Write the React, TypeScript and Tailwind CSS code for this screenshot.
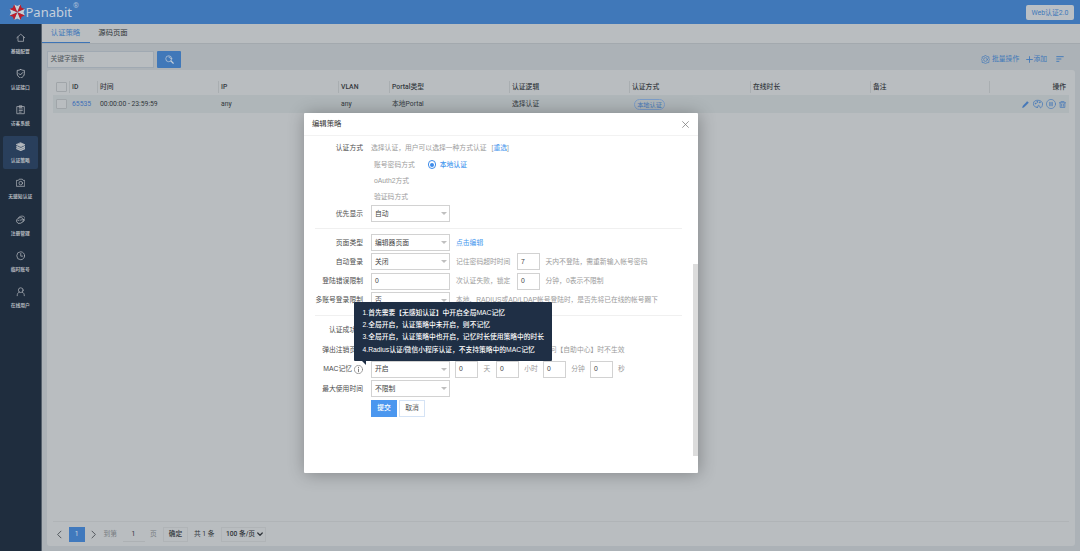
import type { ReactNode } from "react";
import clsx from "clsx";

const stroke = {
  fill: "none",
  stroke: "currentColor",
  strokeWidth: 1.8,
  strokeLinecap: "round" as const,
  strokeLinejoin: "round" as const,
};

function Icon({ children, className }: { children: ReactNode; className?: string }) {
  return (
    <svg viewBox="0 0 24 24" className={clsx("shrink-0", className)} {...stroke}>
      {children}
    </svg>
  );
}

const menu = [
  { label: "基础配置", icon: <path d="M2 12 12 3l10 9M5 10v11h14V10" /> },
  {
    label: "认证接口",
    icon: (
      <path
        d="M12 1c3 2 6 2.500 9 2.500V12c0 5-4 9-9 11-5-2-9-6-9-11V3.500c3 0 6-.5 9-2.500zM7.500 11.500l3.500 3.500 6-6"
        strokeWidth={2.200}
      />
    ),
  },
  {
    label: "访客系统",
    icon: <path d="M3 4h18v18H3zM9 2h6v4H9zM8 10h8M8 14h8M8 18h5" />,
  },
  {
    label: "认证策略",
    active: true,
    icon: (
      <>
        <path d="M12 2 23 7l-11 5L1 7z" fill="currentColor" />
        <path d="m2 12 10 4.500L22 12M2 16.500 12 21l10-4.500" strokeWidth={3.500} />
      </>
    ),
  },
  {
    label: "无感知认证",
    icon: (
      <>
        <path d="M2 6h4l2-3h8l2 3h4v15H2z" />
        <circle cx="12" cy="13" r="4.500" />
      </>
    ),
  },
  {
    label: "注册管理",
    icon: (
      <>
        <ellipse cx="10" cy="14" rx="9" ry="7" transform="rotate(-20 10 14)" />
        <path d="M6 7c3-5 13-6 16-1 2 4-1 9-4 11M5 14l3-1M11 13l4-1" />
      </>
    ),
  },
  {
    label: "临时账号",
    icon: (
      <>
        <circle cx="12" cy="12" r="10" />
        <path d="M12 6v7h5" />
      </>
    ),
  },
  {
    label: "在线用户",
    icon: (
      <>
        <circle cx="12" cy="8" r="6" />
        <path d="M3 22c0-5 2-8 5-9M21 22c0-5-2-8-5-9" />
      </>
    ),
  },
];

function Logo() {
  return (
    <svg viewBox="-9.300 -9.300 18.600 18.600" className="mt-px h-[16.500px] w-[16.500px] shrink-0">
      {[0, 45, 90, 135, 180, 225, 270, 315].map((a, i) => (
        <path
          key={a}
          d="M0 0 3.600 -8.600 0 -7 -3.600 -8.600z"
          transform={`rotate(${a})`}
          fill={i % 2 ? "#c01c28" : "#c9cdd1"}
        />
      ))}
    </svg>
  );
}

function Sidebar() {
  return (
    <aside className="flex w-[41.500px] shrink-0 flex-col items-center border-r border-[#56616d] bg-[#1f2d3e] pt-[3px] text-[#b4b9be]">
      {menu.map((m) => (
        <div key={m.label} className="h-[36.430px] w-[35px]">
          <div
            className={clsx(
              "flex h-[33.500px] flex-col items-center rounded-[2px] pt-[6px]",
              m.active && "bg-[#293f5c]",
            )}
          >
            <Icon className="h-[9.500px] w-[9.500px]">{m.icon}</Icon>
            <span className="mt-[6.500px] text-[4.800px] leading-[6px] font-bold whitespace-nowrap">{m.label}</span>
          </div>
        </div>
      ))}
    </aside>
  );
}

function Cell({ children, className, head }: { children?: ReactNode; className?: string; head?: boolean }) {
  return (
    <div
      className={clsx(
        "flex items-center whitespace-nowrap",
        head ? "border-l border-[#a9aeb1] pl-[2px]" : "pl-[3px]",
        className,
      )}
    >
      {children}
    </div>
  );
}

const columns = ["ID", "时间", "IP", "VLAN", "Portal类型", "认证逻辑", "认证方式", "在线时长", "备注"];
const grid = "grid grid-cols-[16px_28px_121px_120px_51px_120px_120px_121px_120px_119px_80px]";

function Table() {
  return (
    <div className="mx-[6px] pt-[8px] text-[6.800px] text-[#33383d]">
      <div className={clsx(grid, "h-[17px] items-center font-medium")}>
        <div className="ml-[3px] h-[10px] w-[10.500px] rounded-[1px] border border-[#a0a5a9]" />
        {columns.map((c) => (
          <Cell key={c} head className="h-[12px]">
            {c}
          </Cell>
        ))}
        <Cell head className="h-[12px] justify-end pr-[3px]">
          操作
        </Cell>
      </div>
      <div className={clsx(grid, "h-[18px] items-center bg-[#afb6b9]")}>
        <div className="ml-[3px] h-[10px] w-[10.500px] rounded-[1px] border border-[#a0a5a9] bg-[#b9bdc0]" />
        <Cell className="text-[#4070b8]">65535</Cell>
        <Cell>00:00:00 - 23:59:59</Cell>
        <Cell>any</Cell>
        <Cell>any</Cell>
        <Cell>本地Portal</Cell>
        <Cell>选择认证</Cell>
        <Cell>
          <span className="ml-[2px] mt-px flex h-[11px] w-[31px] items-center justify-center rounded-full border border-[#7c9dc9] text-[6.200px] text-[#4377b9]">
            本地认证
          </span>
        </Cell>
        <Cell />
        <Cell />
        <Cell className="justify-end gap-[3px] pr-[3px] text-[#4377b9]">
          <Icon className="h-[7px] w-[7px]">
            <path d="M2 22l2-6L18 2l4 4L8 20z" fill="currentColor" />
          </Icon>
          <Icon className="ml-px h-[10px] w-[10px]">
            <path d="M10 20C5 20 1 17 1 11S6 3 12 3s11 4 11 9-3 9-5 9-1-3-3-5-4 0-3 2-1 2-2 2z" />
            <circle cx="6" cy="11" r="1" />
            <circle cx="10" cy="7" r="1" />
            <circle cx="16" cy="8" r="1" />
          </Icon>
          <Icon className="h-[10px] w-[10px]">
            <circle cx="12" cy="12" r="11" strokeWidth={1.500} />
            <path d="M9.500 8v8M14.500 8v8" strokeWidth={2.500} />
          </Icon>
          <Icon className="h-[7px] w-[7px]">
            <path d="M1 6h22M7 2h10M4 7v15h16V7M9 11v7M15 11v7" strokeWidth={2.500} />
          </Icon>
        </Cell>
      </div>
    </div>
  );
}

function Pagination() {
  return (
    <div className="mx-[6px] mt-auto flex h-[25px] items-center border-t border-[#b0b4b7] text-[6.700px] text-[#30353a]">
      <Icon className="ml-[2px] h-[9px] w-[9px] text-[#4b5156]">
        <path d="M16 3 7 12l9 9" strokeWidth={2.500} />
      </Icon>
      <span className="ml-[5px] flex h-[15px] w-[15.500px] items-center justify-center bg-[#4079bd] text-[#d3d8dd]">1</span>
      <Icon className="ml-[4px] h-[9px] w-[9px] text-[#4b5156]">
        <path d="m8 3 9 9-9 9" strokeWidth={2.500} />
      </Icon>
      <span className="ml-[6px] w-[19px] text-[#777c80]">到第</span>
      <span className="flex h-[15px] w-[22px] items-center justify-center border-b border-[#adb1b4]">1</span>
      <span className="ml-[5.500px] w-[13px] text-[#777c80]">页</span>
      <span className="flex h-[15px] w-[25px] items-center justify-center border border-[#b0b4b7] font-medium">确定</span>
      <span className="ml-[6px] w-[27px] whitespace-nowrap">共 1 条</span>
      <span className="flex h-[15px] w-[45px] items-center justify-between border border-[#b0b4b7] pr-[2px] pl-[4px] font-medium whitespace-nowrap">
        100 条/页
        <Icon className="h-[6px] w-[6px]">
          <path d="m3 8 9 9 9-9" strokeWidth={5} />
        </Icon>
      </span>
    </div>
  );
}

function Row({ label, children, className }: { label?: ReactNode; children?: ReactNode; className?: string }) {
  return (
    <div className={clsx("flex items-center whitespace-nowrap", className)}>
      <div className="flex w-[59px] shrink-0 items-center justify-end text-[#4d4d4d]">{label}</div>
      <div className="ml-[8px] flex items-center">{children}</div>
    </div>
  );
}

function Select({ value }: { value?: string }) {
  return (
    <div className="flex h-[17px] w-[79px] items-center border border-[#d2d2d2] pr-[2px] pl-[3px] text-[#444]">
      {value}
      <span className="ml-auto h-0 w-0 border-x-[3.500px] border-t-[3.500px] border-x-transparent border-t-[#bfbfbf]" />
    </div>
  );
}

function Num({ value }: { value: string }) {
  return <div className="flex h-[17px] w-[23px] shrink-0 items-center border border-[#d2d2d2] pl-[3px] text-[#444]">{value}</div>;
}

function Hint({ children, className }: { children: ReactNode; className?: string }) {
  return <span className={clsx("text-[#9b9b9b]", className)}>{children}</span>;
}

function Tooltip() {
  return (
    <div className="absolute top-[189px] left-[50px] h-[59px] w-[198px] rounded-[1px] bg-[#1f2f45] pt-[4.500px] pl-[8.500px] text-[6.780px] leading-[12.450px] font-medium whitespace-nowrap text-white">
      <p>1.首先需要【无感知认证】中开启全局MAC记忆</p>
      <p>2.全局开启，认证策略中未开启，则不记忆</p>
      <p>3.全局开启，认证策略中也开启，记忆时长使用策略中的时长</p>
      <p>4.Radius认证/微信小程序认证，不支持策略中的MAC记忆</p>
      <span className="absolute top-[58px] left-[7px] h-0 w-0 border-t-[5px] border-l-[5px] border-t-[#1f2f45] border-l-transparent" />
    </div>
  );
}

function Dialog() {
  return (
    <div className="absolute top-[113px] left-[304px] h-[360px] w-[393.500px] rounded-[1px] bg-white font-['Liberation_Sans','Noto_Sans_CJK_SC',sans-serif] text-[6.800px] leading-[10px] shadow-[1px_1px_17px_rgba(0,0,0,0.3)]">
      <div className="flex h-[23px] items-center justify-between border-b border-[#f2f2f2] pr-[9px] pl-[8px] text-[7.350px] text-[#333]">
        编辑策略
        <Icon className="mt-px h-[7px] w-[7px] text-[#777]">
          <path d="m2 2 20 20M22 2 2 22" strokeWidth={2.500} />
        </Icon>
      </div>
      <div className="pt-[2.600px]">
        <Row label="认证方式" className="h-[18px]">
          <Hint>选择认证，用户可以选择一种方式认证</Hint>
          <Hint className="ml-[5px]">
            [<span className="text-[#4596ee]">重选</span>]
          </Hint>
        </Row>
        <Row className="h-[16px]">
          <Hint className="ml-[3px]">账号密码方式</Hint>
          <span className="ml-[13px] flex h-[8.500px] w-[8.500px] items-center justify-center rounded-full border border-[#3d8bea]">
            <span className="h-[4px] w-[4px] rounded-full bg-[#3d8bea]" />
          </span>
          <span className="ml-[3.500px] font-medium text-[#4596ee]">本地认证</span>
        </Row>
        <Row className="h-[16px]">
          <Hint className="ml-[3px]">oAuth2方式</Hint>
        </Row>
        <Row className="h-[16px]">
          <Hint className="ml-[3px]">验证码方式</Hint>
        </Row>
        <Row label="优先显示" className="h-[18px]">
          <Select value="自动" />
        </Row>
        <div className="mr-[16px] mt-[5px] mb-[4.500px] ml-[11px] h-px bg-[#f0f0f0]" />
        <Row label="页面类型" className="h-[19.200px]">
          <Select value="编辑器页面" />
          <span className="ml-[6px] text-[#4596ee]">点击编辑</span>
        </Row>
        <Row label="自动登录" className="h-[19.200px]">
          <Select value="关闭" />
          <Hint className="ml-[6px] w-[61px]">记住密码超时时间</Hint>
          <Num value="7" />
          <Hint className="ml-[5.500px]">天内不登陆，需重新输入帐号密码</Hint>
        </Row>
        <Row label="登陆错误限制" className="h-[19.200px]">
          <div className="flex h-[17px] w-[79px] items-center border border-[#d2d2d2] pl-[3px] text-[#444]">0</div>
          <Hint className="ml-[6px] w-[61px]">次认证失败，锁定</Hint>
          <Num value="0" />
          <Hint className="ml-[5.500px]">分钟，0表示不限制</Hint>
        </Row>
        <Row label="多账号登录限制" className="h-[19.200px]">
          <Select value="否" />
          <Hint className="ml-[6px] text-[6.720px]">本地、RADIUS或AD/LDAP帐号登陆时，是否先将已在线的帐号踢下</Hint>
        </Row>
        <div className="mr-[16px] mt-[5px] mb-[4.500px] ml-[11px] h-px bg-[#f0f0f0]" />
        <Row label="认证成功后" className="h-[19.500px]">
          <Select />
        </Row>
        <Row label="弹出注销页面" className="h-[19.500px]">
          <Select />
          <Hint className="ml-[6px] w-[168.500px] text-right">访问【自助中心】时不生效</Hint>
        </Row>
        <Row
          label={
            <>
              MAC记忆
              <Icon className="ml-[2px] h-[9px] w-[9px] text-[#777]">
                <circle cx="12" cy="12" r="11" />
                <path d="M12 11v7M12 6v1" strokeWidth={2.500} />
              </Icon>
            </>
          }
          className="h-[19.500px]"
        >
          <Select value="开启" />
          <span className="ml-[5px]" />
          <Num value="0" />
          <Hint className="w-[18px] text-center">天</Hint>
          <Num value="0" />
          <Hint className="w-[24px] text-center">小时</Hint>
          <Num value="0" />
          <Hint className="w-[24px] text-center">分钟</Hint>
          <Num value="0" />
          <Hint className="ml-[5px]">秒</Hint>
        </Row>
        <Row label="最大使用时间" className="h-[19.500px]">
          <Select value="不限制" />
        </Row>
        <Row className="h-[19.500px]">
          <span className="flex h-[17px] w-[26px] items-center justify-center bg-[#4b97ef] font-medium text-white">提交</span>
          <span className="ml-[2px] flex h-[17px] w-[26px] items-center justify-center border border-[#d5e3f5] text-[#555]">取消</span>
        </Row>
      </div>
      {/* scrollbar thumb */}
      <div className="absolute top-[151px] right-0 h-[192px] w-[4.500px] bg-[#dcdcdc]" />
      <Tooltip />
    </div>
  );
}

export default function App() {
  return (
    <div className="relative flex h-[551px] w-[1080px] flex-col overflow-hidden bg-[#acb2b7] font-['Roboto','Noto_Sans_CJK_SC',sans-serif] text-[7px] leading-[10px]">
      <header className="flex h-[23.500px] shrink-0 items-center bg-[#4078b9] pr-[6px] pl-[8.500px]">
        <Logo />
        <span className="ml-[.5px] font-['Noto_Sans'] text-[13px] leading-[20px] text-[#c5d0dc]">Panabit</span>
        <span className="mb-[11px] ml-px text-[7.500px] text-[#a9bfd8]">®</span>
        <span className="mt-[2px] ml-auto flex h-[15px] w-[48px] items-center justify-center rounded-[2px] bg-[#b9bfc5] text-[6.900px] text-[#4078b9]">
          Web认证2.0
        </span>
      </header>
      <div className="flex min-h-0 flex-1">
        <Sidebar />
        <main className="flex flex-1 flex-col">
          <nav className="flex h-[20.500px] shrink-0 border-b border-[#a3a9ae] bg-[#b9bdc0] text-[7.350px]">
            <span className="flex w-[48px] items-center justify-center border-b border-[#3d74b6] text-[#4078b9]">认证策略</span>
            <span className="flex w-[47px] items-center justify-center text-[#30353a]">源码页面</span>
          </nav>
          <div className="flex h-[26px] shrink-0 items-center pt-[4px] pl-[5.500px] text-[#4078b9]">
            <div className="flex h-[17px] w-[107px] items-center border border-[#a0a9b2] bg-[#b9bdc0] pl-[2.500px] text-[6.750px] text-[#4f555a]">
              关键字搜索
            </div>
            <div className="ml-[3px] flex h-[17px] w-[24px] items-center justify-center rounded-[1px] bg-[#4078b9] text-[#c6d0da]">
              <Icon className="h-[9px] w-[9px]">
                <circle cx="10" cy="10" r="8" />
                <path d="m16 16 6 6" strokeWidth={3} />
                <path d="M10 5a5 5 0 0 1 5 5" />
              </Icon>
            </div>
            <Icon className="ml-auto h-[9px] w-[9px]">
              <path d="m12 1 4 3 5 1 0 5 2 2-2 3v5l-5 .5-4 2.500-4-2.500L3 20v-5l-2-3 2-2V5l5-1z" />
              <circle cx="12" cy="12" r="5" />
            </Icon>
            <span className="ml-[2px] w-[33.500px] text-[6.800px]">批量操作</span>
            <Icon className="h-[7px] w-[7px]">
              <path d="M12 2v20M2 12h20" strokeWidth={3} />
            </Icon>
            <span className="ml-px w-[22px] text-[6.800px]">添加</span>
            <Icon className="mr-[17.500px] h-[8px] w-[8px]">
              <path d="M1 5h22M1 12h15M1 19h9" strokeWidth={2.800} strokeLinecap="butt" />
            </Icon>
          </div>
          <section className="mr-[6px] mb-[5px] ml-[5.500px] flex flex-1 flex-col rounded-[3px] bg-[#b9bdc0]">
            <Table />
            <Pagination />
          </section>
        </main>
      </div>
      <Dialog />
    </div>
  );
}
